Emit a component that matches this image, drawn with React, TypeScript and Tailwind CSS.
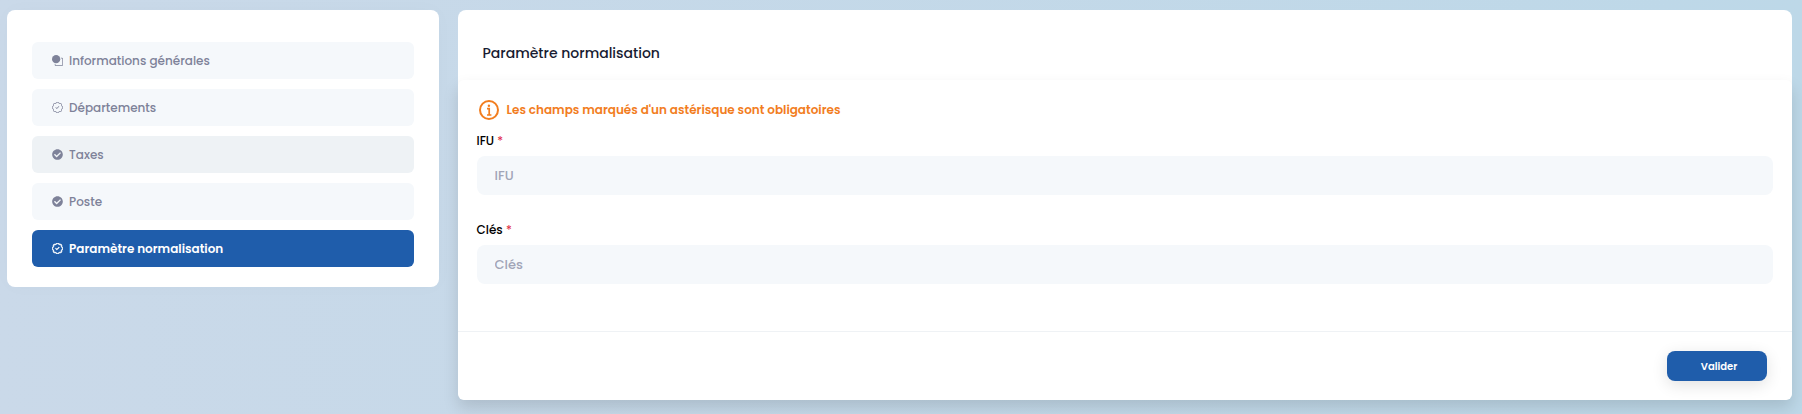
import React from "react";
import { clsx } from "clsx";
import { BsCircleSquare, BsPatchCheck } from "react-icons/bs";
import { FaCheckCircle } from "react-icons/fa";
import type { IconType } from "react-icons";

interface MenuItem {
  label: string;
  icon: IconType;
  state?: "active" | "hover";
}

const menuItems: MenuItem[] = [
  { label: "Informations générales", icon: BsCircleSquare },
  { label: "Départements", icon: BsPatchCheck },
  { label: "Taxes", icon: FaCheckCircle, state: "hover" },
  { label: "Poste", icon: FaCheckCircle },
  { label: "Paramètre normalisation", icon: BsPatchCheck, state: "active" },
];

const fields = [
  { id: "ifu", label: "IFU" },
  { id: "cles", label: "Clés" },
];

function InfoIcon() {
  return (
    <svg width="20" height="20" viewBox="0 0 20 20" fill="none" stroke="currentColor" aria-hidden="true">
      <circle cx="10" cy="10" r="9" strokeWidth="2" />
      <circle cx="9.9" cy="5.7" r="1.2" fill="currentColor" stroke="none" />
      <path d="M8 8.6h2.2v6.2M8 15h4.4" strokeWidth="1.7" />
    </svg>
  );
}

function SideMenu() {
  return (
    <nav className="flex flex-col gap-[10px] rounded-lg bg-white px-[25px] pt-8 pb-5 shadow-[0_0_20px_rgba(76,87,125,0.02)]">
      {menuItems.map(({ label, icon: Icon, state }) => (
        <button
          key={label}
          type="button"
          className={clsx(
            "flex h-[37px] w-full items-center gap-[6px] rounded-md px-5 text-[12px]",
            state === "active" && "bg-[#1f5dab] font-semibold text-white",
            state === "hover" && "bg-[#eef2f5] font-medium text-[#7e8299]",
            !state && "bg-[#f5f8fb] font-medium text-[#7e8299]"
          )}
        >
          <Icon className={clsx("h-[11px] w-[11px] shrink-0", state === "active" && "stroke-1")} />
          {label}
        </button>
      ))}
    </nav>
  );
}

export default function App() {
  return (
    <div className="min-h-screen bg-linear-to-r from-[#cad9e9] to-[#bdd8e8] pt-[10px] pb-3 font-['Poppins','Inter',sans-serif]">
      <div className="grid grid-cols-4 items-start">
        <aside className="pr-3 pl-[7px]">
          <SideMenu />
        </aside>

        <main className="col-span-3 pr-[10px] pl-[7px]">
          <div className="rounded-lg bg-white">
            <div className="flex h-[70px] items-center px-[25px] pt-[17px]">
              <h1 className="text-[14px] font-medium text-[#181c32]">Paramètre normalisation</h1>
            </div>

            <form
              className="rounded-md bg-white shadow-[0_8px_16px_rgba(0,0,0,0.13)]"
              onSubmit={(e) => e.preventDefault()}
            >
              <div className="px-[19px] pt-5 pb-[47px]">
                <p className="flex h-5 items-center gap-2 pl-[2px] text-[12px] font-semibold text-[#f27d1e]">
                  <InfoIcon />
                  Les champs marqués d'un astérisque sont obligatoires
                </p>
                <div className="flex flex-col gap-[25px] pt-[11px]">
                  {fields.map((field) => (
                    <div key={field.id} className="flex flex-col gap-[5px]">
                      <label htmlFor={field.id} className="text-[12px] leading-5 font-medium text-black">
                        {field.label} <span className="font-normal text-[#e0243c]">*</span>
                      </label>
                      <input
                        id={field.id}
                        type="text"
                        placeholder={field.label}
                        className="h-[39px] w-full rounded-lg bg-[#f5f8fb] px-[18px] text-[13px] font-medium text-[#5e6278] outline-none placeholder:text-[#a1a5b7]"
                      />
                    </div>
                  ))}
                </div>
              </div>

              <div className="flex justify-end border-t border-[#eff2f5] px-[25px] py-[19px]">
                <button
                  type="submit"
                  className="h-[30px] w-[100px] rounded-lg bg-[#1f5dab] pl-1 text-[10px] font-semibold text-white shadow-[0_4px_16px_rgba(0,0,0,0.12)]"
                >
                  Valider
                </button>
              </div>
            </form>
          </div>
        </main>
      </div>
    </div>
  );
}
